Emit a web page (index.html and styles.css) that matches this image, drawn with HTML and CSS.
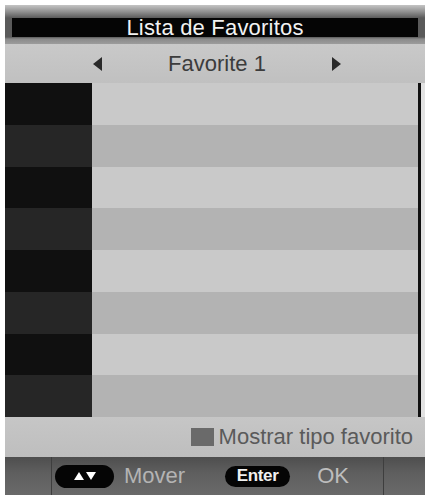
FILE: index.html
```html
<!DOCTYPE html>
<html lang="pt">
<head>
<meta charset="utf-8">
<title>Lista de Favoritos</title>
<link rel="stylesheet" href="styles.css">
</head>
<body>
<div class="screen">
  <div class="title">
    <div class="title-band">Lista de Favoritos</div>
  </div>
  <div class="nav">
    <svg class="arrow" width="9" height="14" viewBox="0 0 9 14"><polygon points="9,0 9,14 0,7" fill="#2a2a2a"/></svg>
    <span class="nav-label">Favorite 1</span>
    <svg class="arrow" width="9" height="14" viewBox="0 0 9 14"><polygon points="0,0 0,14 9,7" fill="#2a2a2a"/></svg>
  </div>
  <div class="list">
    <div class="col-num">
      <div class="cell"></div><div class="cell"></div><div class="cell"></div><div class="cell"></div>
      <div class="cell"></div><div class="cell"></div><div class="cell"></div><div class="cell"></div>
    </div>
    <div class="col-name">
      <div class="cell"></div><div class="cell"></div><div class="cell"></div><div class="cell"></div>
      <div class="cell"></div><div class="cell"></div><div class="cell"></div><div class="cell"></div>
    </div>
    <div class="scroll"></div>
    <div class="edge"></div>
  </div>
  <div class="legend">
    <span class="swatch"></span>
    <span class="legend-text">Mostrar tipo favorito</span>
  </div>
  <div class="footer">
    <div class="foot-side left"></div>
    <div class="foot-main">
      <span class="pill pill-arrows">
        <svg width="22" height="8" viewBox="0 0 22 8"><polygon points="0,8 5,0 10,8" fill="#fff"/><polygon points="12,0 22,0 17,8" fill="#fff"/></svg>
      </span>
      <span class="foot-label mover">Mover</span>
      <span class="pill pill-enter">Enter</span>
      <span class="foot-label ok">OK</span>
    </div>
    <div class="foot-side right"></div>
  </div>
</div>
</body>
</html>
```

FILE: styles.css
```css
html, body {
  margin: 0;
  padding: 0;
  background: #ffffff;
}

body {
  padding: 5px;
  font-family: "Liberation Sans", Arial, sans-serif;
}

.screen {
  width: 420px;
  height: 490px;
  display: flex;
  flex-direction: column;
}

.title {
  height: 39px;
  box-sizing: border-box;
  padding: 13px 7px 7px 7px;
  background: linear-gradient(to bottom, #c4c4c4 0px, #8e8e8e 7px, #5a5a5a 13px, #5a5a5a 32px, #8a8a8a 34px, #9c9c9c 39px);
}

.title-band {
  height: 19px;
  background: #050505;
  color: #f2f2f2;
  font-size: 22px;
  line-height: 19px;
  text-align: center;
  letter-spacing: 0.2px;
}

.nav {
  height: 39px;
  background: linear-gradient(to bottom, #c9c9c9, #c0c0c0);
  display: flex;
  align-items: center;
  justify-content: center;
  gap: 66px;
  padding-left: 4px;
}

.nav-label {
  font-size: 22px;
  color: #3c3c3c;
}

.list {
  height: 334px;
  display: flex;
}

.col-num {
  width: 87px;
  display: grid;
  grid-template-rows: repeat(8, 1fr);
}

.col-num .cell:nth-child(odd) { background: #101010; }
.col-num .cell:nth-child(even) { background: #262626; }

.col-name {
  flex: 1;
  display: grid;
  grid-template-rows: repeat(8, 1fr);
}

.col-name .cell:nth-child(odd) { background: #c9c9c9; }
.col-name .cell:nth-child(even) { background: #b3b3b3; }

.scroll {
  width: 3px;
  background: #111111;
}

.edge {
  width: 4px;
  background: #e2e2e2;
}

.legend {
  height: 40px;
  background: linear-gradient(to bottom, #c6c6c6, #bebebe);
  display: flex;
  align-items: center;
  justify-content: flex-end;
  padding-right: 12px;
  gap: 5px;
}

.swatch {
  width: 23px;
  height: 18px;
  background: #6a6a6a;
}

.legend-text {
  font-size: 22px;
  color: #5a5a5a;
}

.footer {
  height: 38px;
  display: flex;
  background: linear-gradient(to bottom, #4e4e4e, #5e5e5e 40%, #6a6a6a);
}

.foot-side.left {
  width: 46px;
  border-right: 1px solid #3e3e3e;
}

.foot-side.right {
  width: 41px;
  border-left: 1px solid #3e3e3e;
  margin-left: auto;
}

.foot-main {
  flex: 1;
  display: flex;
  align-items: center;
  padding-left: 3px;
}

.pill {
  background: #050505;
  border-radius: 12px;
  display: inline-flex;
  align-items: center;
  justify-content: center;
}

.pill-arrows {
  width: 59px;
  height: 23px;
}

.pill-enter {
  width: 65px;
  height: 21px;
  color: #f0f0f0;
  font-size: 17px;
  font-weight: bold;
  letter-spacing: -0.3px;
  margin-left: 40px;
}

.foot-label {
  font-size: 22px;
  color: #b4b4b4;
}

.mover {
  margin-left: 10px;
}

.ok {
  margin-left: 27px;
  color: #bdbdbd;
}
```
